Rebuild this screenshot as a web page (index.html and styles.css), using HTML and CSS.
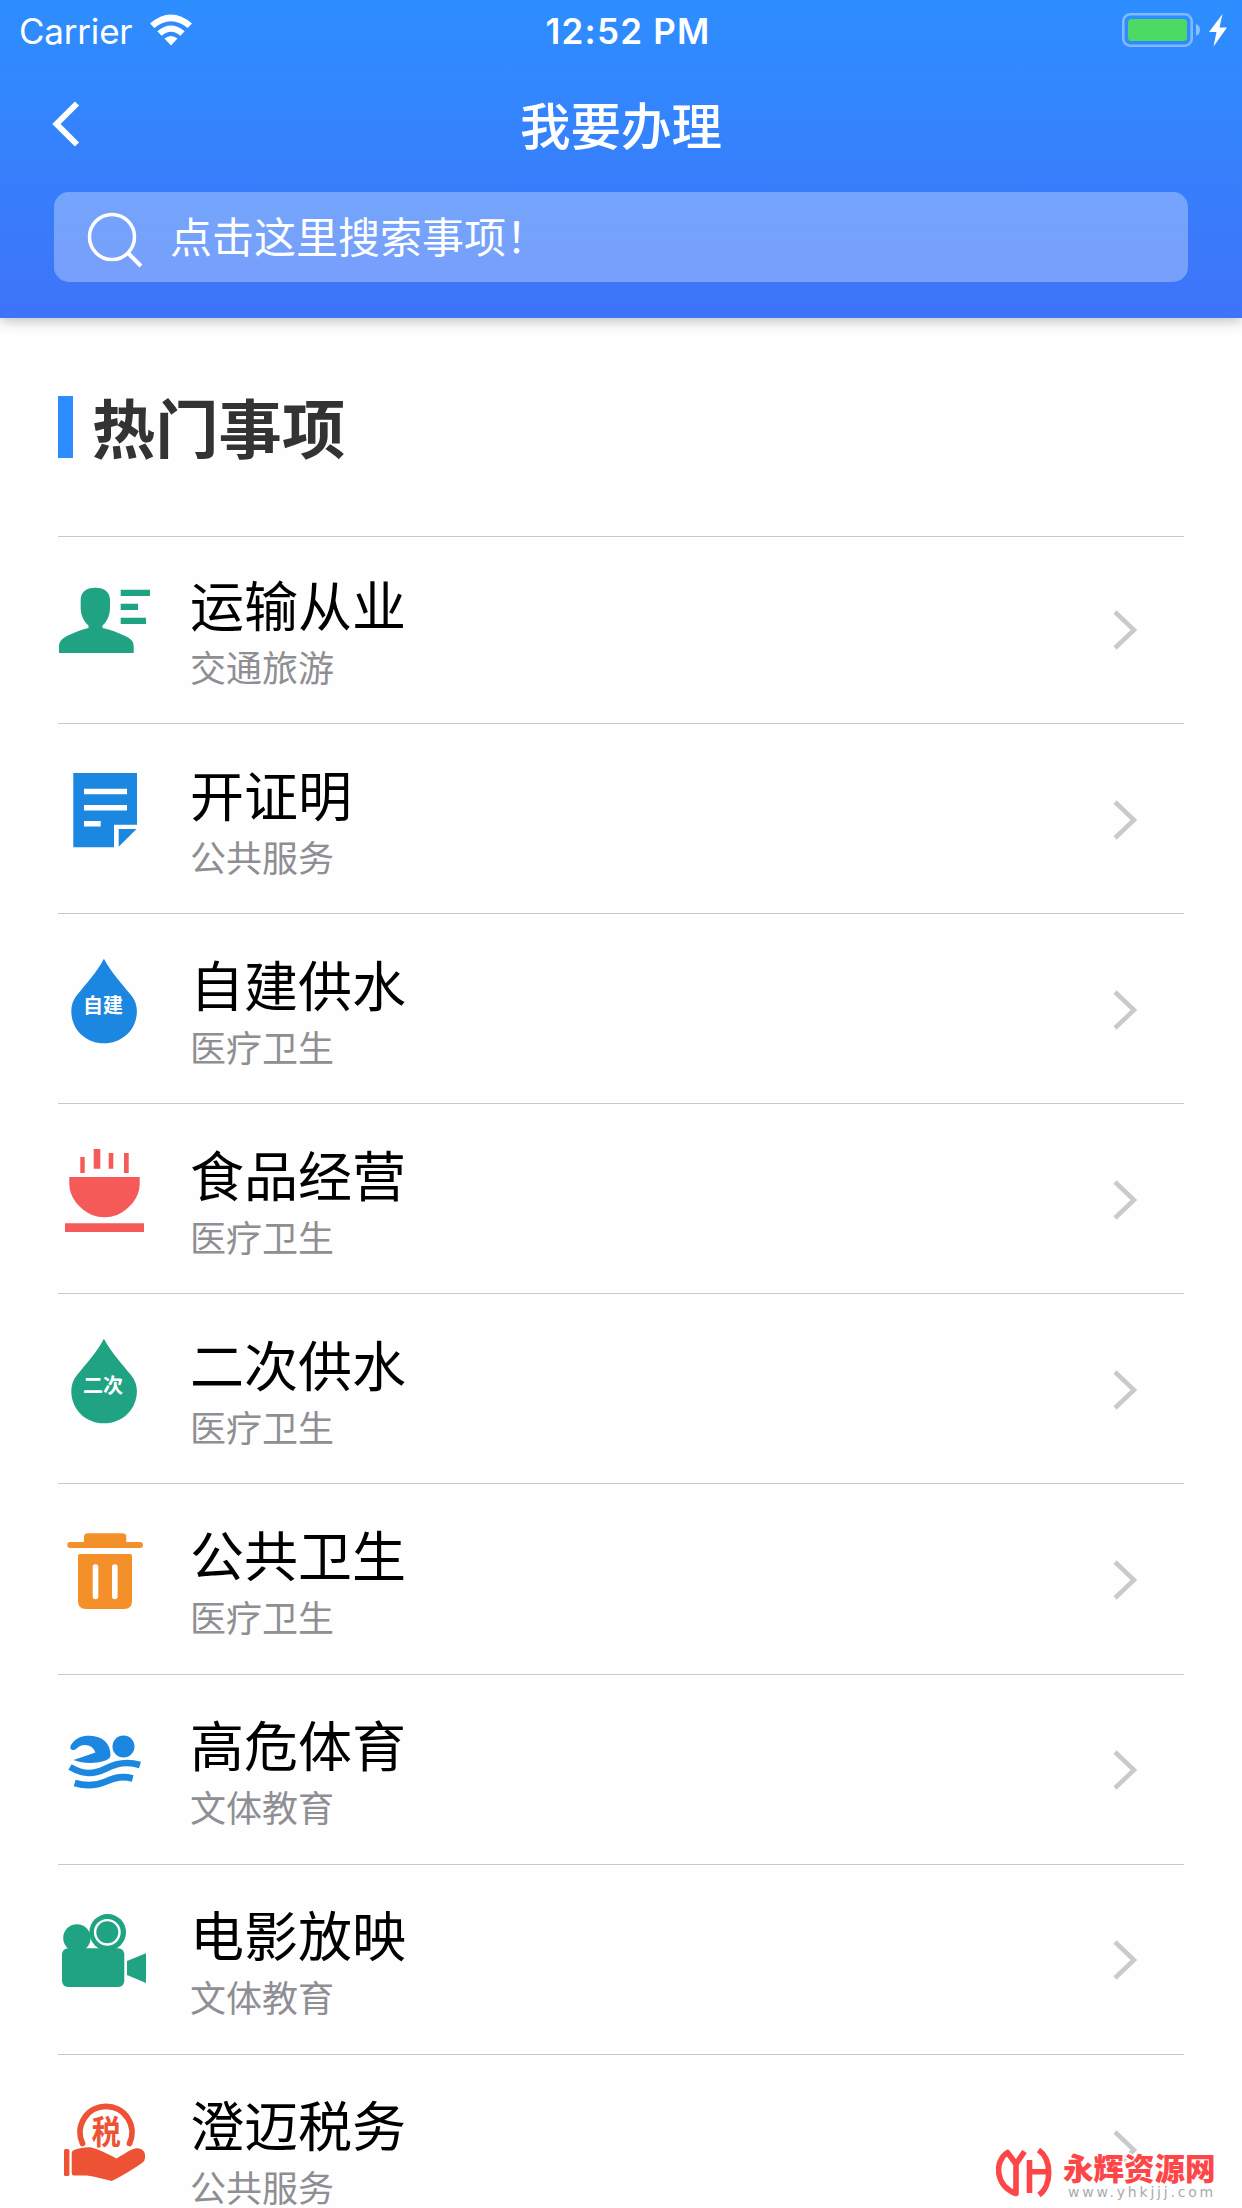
FILE: index.html
```html
<!DOCTYPE html>
<html lang="zh-CN">
<head>
<meta charset="utf-8">
<title>我要办理</title>
<link rel="stylesheet" href="styles.css">
</head>
<body>
<div class="screen">
  <header class="header">
    <div class="status">
      <div class="status-left">
        <span class="carrier">Carrier</span>
        <svg class="wifi" width="42" height="32" viewBox="0 0 42 32" fill="#fff"><path d="M0 9.5Q21-8.5 42 9.5L37.7 14Q21 .5 4.3 14Z"/><path d="M7.3 17.2Q21 5.8 34.7 17.2L30.3 21.8Q21 13.8 11.7 21.8Z"/><path d="M14.5 24.6Q21 19.4 27.5 24.6L21 31.5Z"/></svg>
      </div>
      <span class="time">12:52 PM</span>
      <svg class="battery" width="106" height="36" viewBox="0 0 106 36"><rect x="1.3" y="2.3" width="68.4" height="31.4" rx="7" fill="none" stroke="#fff" stroke-opacity=".4" stroke-width="2.6"/><rect x="6" y="7" width="59" height="22" rx="3.5" fill="#4cd964"/><path d="M74 12Q78 13.500 78 18T74 24Z" fill="#fff" fill-opacity=".45"/><path d="M100.500 2L87 20H94.500L91.500 34.500L105 15.500H97.500Z" fill="#fff"/></svg>
    </div>
    <nav class="nav">
      <svg class="back" width="30" height="46" viewBox="0 0 30 46"><path d="M25 2.500L4.500 23L25 43.500" fill="none" stroke="#fff" stroke-width="6"/></svg>
      <h1 class="nav-title">我要办理</h1>
    </nav>
    <div class="search">
      <svg class="search-icon" width="56" height="56" viewBox="0 0 56 56" fill="none" stroke="#fff" stroke-width="3.500"><circle cx="25" cy="25" r="22.500"/><path d="M41 41L54 54" stroke-width="4"/></svg>
      <span class="search-text">点击这里搜索事项！</span>
    </div>
  </header>

  <main class="content">
    <div class="section-head"><h2 class="section-title">热门事项</h2></div>
    <ul class="list">
      <li class="item">
        <svg class="icon green" viewBox="0 0 100 100"><path d="M39.500 13.700C48.500 13.700 54 18 54 26V34C54 41 51 48 46.500 51.500V54C55 56 62 58.500 67 61C75 64.500 77.700 67 77.700 73V79H3V73C3 67 6 64.500 13 61C18 58.500 25 56 32.500 54V51.500C28 48 24.700 41 24.700 34V26C24.700 18 30 13.700 39.500 13.700Z"/><path d="M64.700 15.700H94V22H64.700ZM64.700 29.700H82V36H64.700ZM64.700 43.700H90V50H64.700Z"/></svg>
        <div class="text"><div class="title">运输从业</div><div class="sub">交通旅游</div></div>
        <svg class="chevron" viewBox="0 0 24 40"><path d="M2 2L21 20L2 38"/></svg>
      </li>
      <li class="item">
        <svg class="icon blue" viewBox="0 0 100 100"><path d="M17.300 9H81V60.700H58V83.300H17.300Z"/><path d="M62.700 65H80.500L62.700 82.800Z"/><path fill="#fff" d="M28 24.700H71V30.200H28ZM28 41H71V46.500H28ZM28 57H44.700V62.500H28Z"/></svg>
        <div class="text"><div class="title">开证明</div><div class="sub">公共服务</div></div>
        <svg class="chevron" viewBox="0 0 24 40"><path d="M2 2L21 20L2 38"/></svg>
      </li>
      <li class="item">
        <svg class="icon blue" viewBox="0 0 100 100"><path d="M47.900 4.700C55 18 66 30 75 41C79 46 80.900 51 80.900 57C80.900 75.500 66.500 89.300 48 89.300S15.300 75.500 15.300 57C15.300 51 17 46 21 41C30 30 41 18 47.900 4.700Z"/><text class="drop-text" x="47" y="59">自建</text></svg>
        <div class="text"><div class="title">自建供水</div><div class="sub">医疗卫生</div></div>
        <svg class="chevron" viewBox="0 0 24 40"><path d="M2 2L21 20L2 38"/></svg>
      </li>
      <li class="item">
        <svg class="icon red" viewBox="0 0 100 100"><path d="M24.300 13H28.700V29H24.300ZM37.700 5H44.300V24.700H37.700ZM52.700 9H57.300V24.700H52.700ZM68 9H72.700V29H68ZM9 79.300H88V88H9Z"/><path d="M13.300 33H83.700V40C83.700 53 74 65 61 71Q55 73.300 48.500 73.300T36 71C23 65 13.300 53 13.300 40Z"/></svg>
        <div class="text"><div class="title">食品经营</div><div class="sub">医疗卫生</div></div>
        <svg class="chevron" viewBox="0 0 24 40"><path d="M2 2L21 20L2 38"/></svg>
      </li>
      <li class="item">
        <svg class="icon green" viewBox="0 0 100 100"><path d="M47.900 4.700C55 18 66 30 75 41C79 46 80.900 51 80.900 57C80.900 75.500 66.500 89.300 48 89.300S15.300 75.500 15.300 57C15.300 51 17 46 21 41C30 30 41 18 47.900 4.700Z"/><text class="drop-text" x="47" y="59">二次</text></svg>
        <div class="text"><div class="title">二次供水</div><div class="sub">医疗卫生</div></div>
        <svg class="chevron" viewBox="0 0 24 40"><path d="M2 2L21 20L2 38"/></svg>
      </li>
      <li class="item item-tall">
        <svg class="icon orange" viewBox="0 0 100 100"><path d="M28 18V13Q28 9.300 32 9.300H66.500Q70.300 9.300 70.300 13V18H84Q87 18 87 21T84 24H14.300Q11.300 24 11.300 21T14.300 18Z"/><path d="M24 30H74Q76 30 76 32V77Q76 85 68 85H30Q22 85 22 77V32Q22 30 24 30Z"/><g fill="#fff"><rect x="36.700" y="40.300" width="5.600" height="35" rx="2.800"/><rect x="56" y="40.300" width="5.600" height="35" rx="2.800"/></g></svg>
        <div class="text"><div class="title">公共卫生</div><div class="sub">医疗卫生</div></div>
        <svg class="chevron" viewBox="0 0 24 40"><path d="M2 2L21 20L2 38"/></svg>
      </li>
      <li class="item item-raised">
        <svg class="icon blue" viewBox="0 0 100 100"><circle cx="67.500" cy="32.500" r="11"/><path d="M15 31C20 23.500 26 21.500 34 21.700C46 22 54.500 29 54.500 41C54.500 44 52 46 47 47.300C38 50 26 49.500 17.500 46L39.500 38.500C38 34 34 31 29 31C25 31 22 33 19.500 35.500C16 37 13 35 15 31Z"/><path d="M14 53C29 61.500 38 60 49 55C60 49 71 47 84 51M18.700 69C32 73 42 71 50 67.500C60 63 67 62 76.700 64.500" fill="none" stroke="#1b87e0" stroke-width="6.600"/></svg>
        <div class="text"><div class="title">高危体育</div><div class="sub">文体教育</div></div>
        <svg class="chevron" viewBox="0 0 24 40"><path d="M2 2L21 20L2 38"/></svg>
      </li>
      <li class="item item-raised">
        <svg class="icon green" viewBox="0 0 100 100"><circle cx="20.900" cy="34" r="13.700"/><circle cx="51.700" cy="28.300" r="18.300"/><circle cx="51.300" cy="28.300" r="12.200" fill="none" stroke="#fff" stroke-width="2.400"/><rect x="6" y="44.300" width="62.300" height="38.700" rx="6"/><path d="M71 57L90 49.300V79L71 71Z"/></svg>
        <div class="text"><div class="title">电影放映</div><div class="sub">文体教育</div></div>
        <svg class="chevron" viewBox="0 0 24 40"><path d="M2 2L21 20L2 38"/></svg>
      </li>
      <li class="item item-raised">
        <svg class="icon vermilion" viewBox="0 0 100 100"><path d="M26.500 49.500A26 26 0 1 1 73.500 49.500" fill="none" stroke="#ee5234" stroke-width="5.800" stroke-linecap="round"/><text class="tax-text" transform="translate(50.300 49.500) scale(1 1.130)">税</text><rect x="8" y="55" width="5.400" height="27" rx="1.500"/><path d="M18 56C24 54 29 53 34 53.300C42 55 52 60 60.500 64.500C67 61 73 56 80 54.300C85 53.500 89 57 89 61V64Q89 67 86 69C77 75 66 82 55.700 87C48 85 39 82.500 30.700 81.500H18Q15.700 81.500 15.700 79V59Q15.700 57 18 56Z"/></svg>
        <div class="text"><div class="title">澄迈税务</div><div class="sub">公共服务</div></div>
        <svg class="chevron" viewBox="0 0 24 40"><path d="M2 2L21 20L2 38"/></svg>
      </li>
    </ul>
  </main>

  <div class="watermark">
    <svg class="mark" width="56" height="50" viewBox="0 0 56 50" fill="none" stroke="#fc4648" stroke-width="5.600" stroke-linejoin="round"><path d="M20 16V45.500C-1 38 -2 13 11.500 4.500L20 16L28.500 3.500"/><path d="M33.500 12V45M33.500 23.700H51M42.500 2C56 11 56 38 43 47"/></svg>
    <div class="mark-text"><div class="mark-name">永辉资源网</div><div class="mark-url">www.yhkjjj.com</div></div>
  </div>
</div>
</body>
</html>
```
FILE: styles.css
```css
* { box-sizing: border-box; }
body {
  margin: 0;
  font-family: "Noto Sans CJK SC", sans-serif;
  background: #fff;
}
h1, h2, ul { margin: 0; padding: 0; }
.screen {
  position: relative;
  width: 1242px;
  height: 2208px;
  overflow: hidden;
  background: #fefefe;
}

.header {
  height: 318px;
  background: linear-gradient(#2d8eff, #3f73f9);
  color: #fff;
  box-shadow: 0 3px 12px rgba(0, 0, 0, .25);
}
.status {
  display: grid;
  grid-template-columns: 1fr auto 1fr;
  align-items: center;
  height: 60px;
  padding: 0 14px 0 19px;
  font-family: Inter, sans-serif;
  font-size: 35px;
}
.status-left { display: flex; align-items: center; gap: 17px; }
.carrier { width: 114px; padding-top: 2px; letter-spacing: -.2px; white-space: nowrap; }
.time { padding: 2px 0 0 9px; font-weight: 600; letter-spacing: 1.200px; }
.battery { justify-self: end; }
.nav {
  display: grid;
  grid-template-columns: 100px 1fr 100px;
  align-items: center;
  height: 132px;
  padding-bottom: 5px;
}
.back { margin-left: 52px; }
.nav-title {
  margin-top: -2px;
  font-size: 50.500px;
  line-height: 60px;
  font-weight: 500;
  text-align: center;
}
.search {
  display: flex;
  align-items: center;
  height: 90px;
  margin: 0 54px;
  padding-left: 33px;
  gap: 27px;
  border-radius: 15px;
  background: rgba(255, 255, 255, .3);
}
.search-icon { margin-top: 6px; }
.search-text { margin-top: -4px; font-size: 42px; line-height: 50px; }

.content { padding: 0 58px; }
.section-head {
  height: 219px;
  padding-top: 78px;
  border-bottom: 1px solid #c8c7cc;
}
.section-title {
  height: 62px;
  border-left: 15px solid #2d8cff;
  padding-left: 19px;
  font-size: 63.300px;
  line-height: 60px;
  font-weight: 700;
  color: #333;
}
.list { list-style: none; margin-top: -3px; }
.item {
  display: flex;
  height: 190px;
  border-bottom: 1px solid #c8c7cc;
}
.item-tall { height: 191px; }
.item-raised .icon { margin-top: 39px; }
.item-raised .text { padding-top: 38px; }
.item-raised .chevron { margin-top: 75px; }
.icon {
  flex: none;
  width: 100px;
  height: 100px;
  margin: 40px 0 0 -2px;
}
.text { flex: 1; padding: 39px 0 0 34px; }
.title { font-size: 54px; line-height: 61px; color: #000; }
.sub { margin-top: 10px; font-size: 36px; line-height: 44px; color: #8e8e93; }
.chevron {
  flex: none;
  width: 24px;
  height: 40px;
  margin: 76px 47px 0 0;
  fill: none;
  stroke: #cacaca;
  stroke-width: 4.500;
}
.green { fill: #1fa383; }
.blue { fill: #1b87e0; }
.red { fill: #f55a59; }
.orange { fill: #f39029; }
.vermilion { fill: #ee5234; }
.drop-text { font-size: 20px; font-weight: 700; fill: #fff; text-anchor: middle; }
.tax-text { font-size: 29px; font-weight: 700; text-anchor: middle; }

.watermark {
  position: absolute;
  left: 996px;
  top: 2148px;
  display: flex;
  gap: 11px;
}
.mark-name {
  font-size: 30.500px;
  line-height: 38px;
  font-weight: 900;
  color: #fc4648;
  -webkit-text-stroke: 3px #fefefe;
  paint-order: stroke fill;
}
.mark-url {
  margin: -1px 0 0 5px;
  font-family: "DejaVu Sans", sans-serif;
  font-size: 14px;
  line-height: 14px;
  letter-spacing: 2.800px;
  color: #aaa;
}
```
